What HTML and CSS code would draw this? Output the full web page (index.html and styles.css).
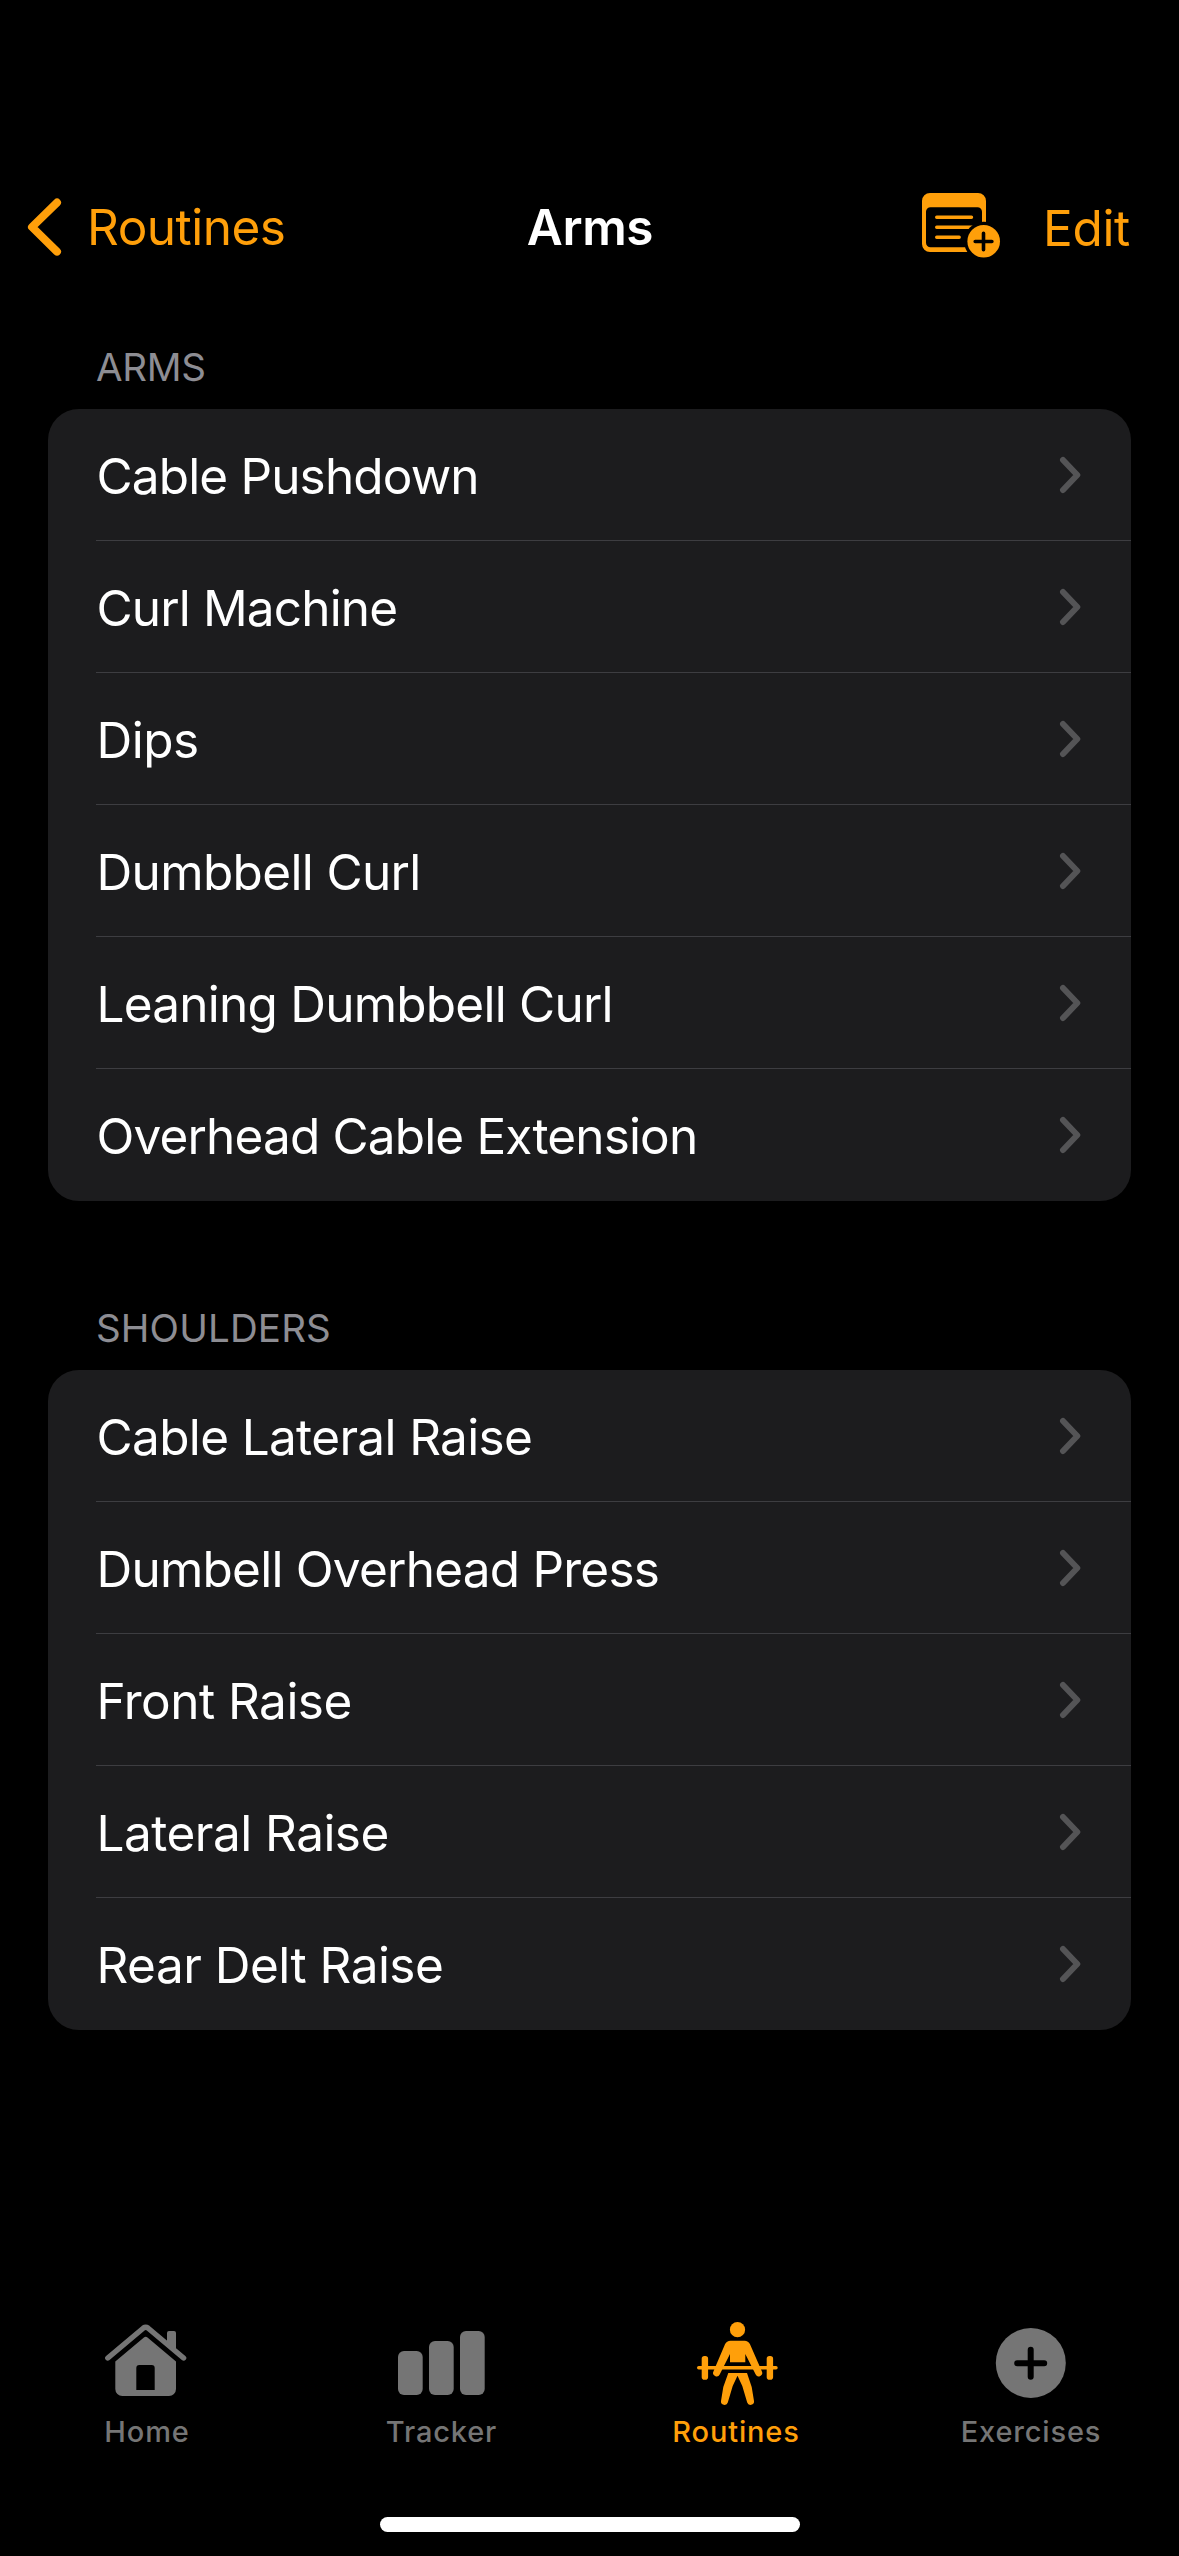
FILE: index.html
```html
<!DOCTYPE html>
<html lang="en">
<head>
<meta charset="utf-8">
<title>Arms</title>
<link rel="stylesheet" href="styles.css">
</head>
<body>
<svg class="defs" aria-hidden="true">
  <symbol id="chevron" viewBox="0 0 24 40"><path d="M4 5 L18.300 20 L4 35" fill="none" stroke="currentColor" stroke-width="6" stroke-linecap="round" stroke-linejoin="round"/></symbol>
</svg>
<div class="screen">
  <header class="navbar">
    <a class="back">
      <svg class="back-icon" viewBox="0 0 40 64"><path d="M33 7.600 L8 32 L33 56.600" fill="none" stroke="currentColor" stroke-width="8" stroke-linecap="round" stroke-linejoin="round"/></svg>
      <span>Routines</span>
    </a>
    <h1 class="title">Arms</h1>
    <div class="actions">
      <svg class="note-icon" viewBox="0 0 84 70">
        <mask id="badge-gap" maskUnits="userSpaceOnUse" x="0" y="0" width="84" height="70">
          <rect width="84" height="70" fill="#fff"/>
          <circle cx="63.7" cy="51.3" r="19.6" fill="#000"/>
        </mask>
        <g mask="url(#badge-gap)">
          <path fill="currentColor" fill-rule="evenodd" d="M10 3H58a8 8 0 0 1 8 8V62H10a8 8 0 0 1-8-8V11a8 8 0 0 1 8-8zM10.500 17.300a4.500 4.500 0 0 0-4.500 4.500V52.800a4.500 4.500 0 0 0 4.500 4.500H62V21.800a4.500 4.500 0 0 0-4.500-4.500z"/>
          <path fill="none" stroke="currentColor" stroke-width="3.400" stroke-linecap="round" d="M16.700 27.300H51.500M16.700 37.300H55M16.700 47.200H39.200"/>
        </g>
        <circle cx="63.700" cy="51.300" r="16.300" fill="currentColor"/>
        <path fill="none" stroke="#000" stroke-width="3.600" stroke-linecap="round" d="M55.200 51.500H71.900M63.500 43.200V59.800"/>
      </svg>
      <a class="edit">Edit</a>
    </div>
  </header>

  <main class="content">
    <section class="group">
      <h2 class="group-label">ARMS</h2>
      <ul class="card">
        <li class="row tight"><span>Cable Pushdown</span><svg class="chevron"><use href="#chevron"/></svg></li>
        <li class="row tight"><span>Curl Machine</span><svg class="chevron"><use href="#chevron"/></svg></li>
        <li class="row loose"><span>Dips</span><svg class="chevron"><use href="#chevron"/></svg></li>
        <li class="row"><span>Dumbbell Curl</span><svg class="chevron"><use href="#chevron"/></svg></li>
        <li class="row snug"><span>Leaning Dumbbell Curl</span><svg class="chevron"><use href="#chevron"/></svg></li>
        <li class="row tight"><span>Overhead Cable Extension</span><svg class="chevron"><use href="#chevron"/></svg></li>
      </ul>
    </section>
    <section class="group">
      <h2 class="group-label wide">SHOULDERS</h2>
      <ul class="card">
        <li class="row"><span>Cable Lateral Raise</span><svg class="chevron"><use href="#chevron"/></svg></li>
        <li class="row snug"><span>Dumbell Overhead Press</span><svg class="chevron"><use href="#chevron"/></svg></li>
        <li class="row loose"><span>Front Raise</span><svg class="chevron"><use href="#chevron"/></svg></li>
        <li class="row loose"><span>Lateral Raise</span><svg class="chevron"><use href="#chevron"/></svg></li>
        <li class="row loose"><span>Rear Delt Raise</span><svg class="chevron"><use href="#chevron"/></svg></li>
      </ul>
    </section>
  </main>

  <nav class="tabbar">
    <a class="tab">
      <svg class="tab-icon" width="97" height="86" viewBox="0 0 97 86" fill="currentColor">
        <path d="M8.800 42L44.500 12Q46.700 10.300 48.900 12L84.600 42" fill="none" stroke="currentColor" stroke-width="5.400" stroke-linecap="round" stroke-linejoin="round"/>
        <path d="M68 26V17a2 2 0 0 1 2-2H75a2 2 0 0 1 2 2V35z"/>
        <path fill-rule="evenodd" d="M44.900 21.500Q46.700 20 48.500 21.500L77 45.500V73a7 7 0 0 1-7 7H23.300a7 7 0 0 1-7-7V45.500zM40.300 49a3 3 0 0 0-3 3V74H55.700V52a3 3 0 0 0-3-3z"/>
      </svg>
      <span class="tab-label">Home</span>
    </a>
    <a class="tab">
      <svg class="tab-icon" width="96" height="86" viewBox="0 0 96 86" fill="currentColor">
        <rect x="4" y="35" width="24.700" height="44" rx="6"/>
        <rect x="35" y="25" width="24.700" height="54" rx="6"/>
        <rect x="66" y="15" width="24.700" height="64" rx="6"/>
      </svg>
      <span class="tab-label">Tracker</span>
    </a>
    <a class="tab active">
      <svg class="tab-icon" width="97" height="86" viewBox="0 0 97 86" fill="currentColor" overflow="visible">
        <circle cx="49.500" cy="13.700" r="7.600"/>
        <rect x="9" y="50" width="80.700" height="3.400" rx="1.700"/>
        <rect x="13.700" y="40" width="6.400" height="23.700" rx="2.800"/>
        <rect x="78.700" y="40" width="6.400" height="23.700" rx="2.800"/>
        <path d="M42.500 24.700H56.500Q60.300 24.700 62 28.200L73.800 55.300A3.400 3.400 0 0 1 67.700 58.400L57.300 38V46.300H42V38L31.700 58.400A3.400 3.400 0 0 1 25.500 55.300L37 28.200Q38.700 24.700 42.500 24.700z"/>
        <path d="M40.300 57H59L63.700 71L66 85A3.500 3.500 0 0 1 59.200 86.500L54.300 70L49.500 59.700L44.700 70L39.800 86.500A3.500 3.500 0 0 1 33 85L35.300 71z"/>
      </svg>
      <span class="tab-label">Routines</span>
    </a>
    <a class="tab">
      <svg class="tab-icon" width="97" height="86" viewBox="0 0 97 86" fill="currentColor">
        <circle cx="47.800" cy="47" r="35"/>
        <path fill="none" stroke="#000" stroke-width="6" stroke-linecap="round" d="M34.200 47.200H61.200M47.700 33.700V60.700"/>
      </svg>
      <span class="tab-label">Exercises</span>
    </a>
  </nav>
  <div class="home-indicator"></div>
</div>
</body>
</html>
```
FILE: styles.css
```css
* { box-sizing: border-box; }

body {
  margin: 0;
  background: #000;
  color: #fff;
  font-family: "Inter", "Liberation Sans", sans-serif;
}

h1, h2, ul { margin: 0; padding: 0; font-weight: 400; }
svg { display: block; flex: none; }
.defs { display: none; }

.screen {
  display: flex;
  flex-direction: column;
  width: 1179px;
  height: 2556px;
  padding-top: 161px;
}

/* Navigation bar */
.navbar {
  display: grid;
  grid-template-columns: 1fr auto 1fr;
  align-items: center;
  height: 132px;
  padding: 0 49px 0 24px;
  font-size: 49.5px;
  line-height: 60px;
  letter-spacing: -0.5px;
}
.back, .actions { display: flex; align-items: center; color: #ff9f0a; }
.back { gap: 23px; }
.back-icon { width: 40px; height: 64px; }
.title {
  padding-left: 26px;
  font-size: 49.5px;
  font-weight: 600;
  line-height: 60px;
  letter-spacing: -0.4px;
  text-align: center;
}
.actions { justify-content: flex-end; gap: 39px; }
.note-icon { width: 84px; height: 70px; margin-bottom: 4px; }
.edit { padding-top: 2px; letter-spacing: -0.3px; }

/* Grouped list */
.content {
  display: flex;
  flex: 1;
  flex-direction: column;
  gap: 103px;
  padding: 50px 48px 0;
}
.group-label {
  padding: 0 48px 18px;
  color: #8d8d93;
  font-size: 38.5px;
  line-height: 48px;
  letter-spacing: -0.3px;
}
.group-label.wide { letter-spacing: 0.15px; }
.card {
  overflow: hidden;
  border-radius: 31px;
  background: #1c1c1e;
  list-style: none;
}
.row {
  display: flex;
  align-items: center;
  justify-content: space-between;
  height: 132px;
  margin-left: 48px;
  padding-right: 48px;
  border-bottom: 1px solid #3d3d41;
  font-size: 49.5px;
  line-height: 60px;
  letter-spacing: -0.65px;
}
.row:last-child { border-bottom-color: transparent; }
.row span { padding: 2px 0 0 0.5px; }
.row.tight { letter-spacing: -0.85px; }
.row.snug { letter-spacing: -0.77px; }
.row.loose { letter-spacing: -0.52px; }
.chevron { width: 24px; height: 40px; color: #545456; }

/* Tab bar */
.tabbar {
  display: grid;
  grid-template-columns: 295px 294px 295px 295px;
  height: 201px;
}
.tab {
  display: flex;
  flex-direction: column;
  align-items: center;
  gap: 11px;
  color: #757575;
  font-size: 29px;
  font-weight: 500;
  line-height: 37px;
  letter-spacing: 0.85px;
}
.tab-label { padding-right: 1px; }
.tab.active { color: #ff9f0a; }

.home-indicator {
  width: 420px;
  height: 15px;
  margin: 0 auto 24px;
  border-radius: 8px;
  background: #fff;
}
```
